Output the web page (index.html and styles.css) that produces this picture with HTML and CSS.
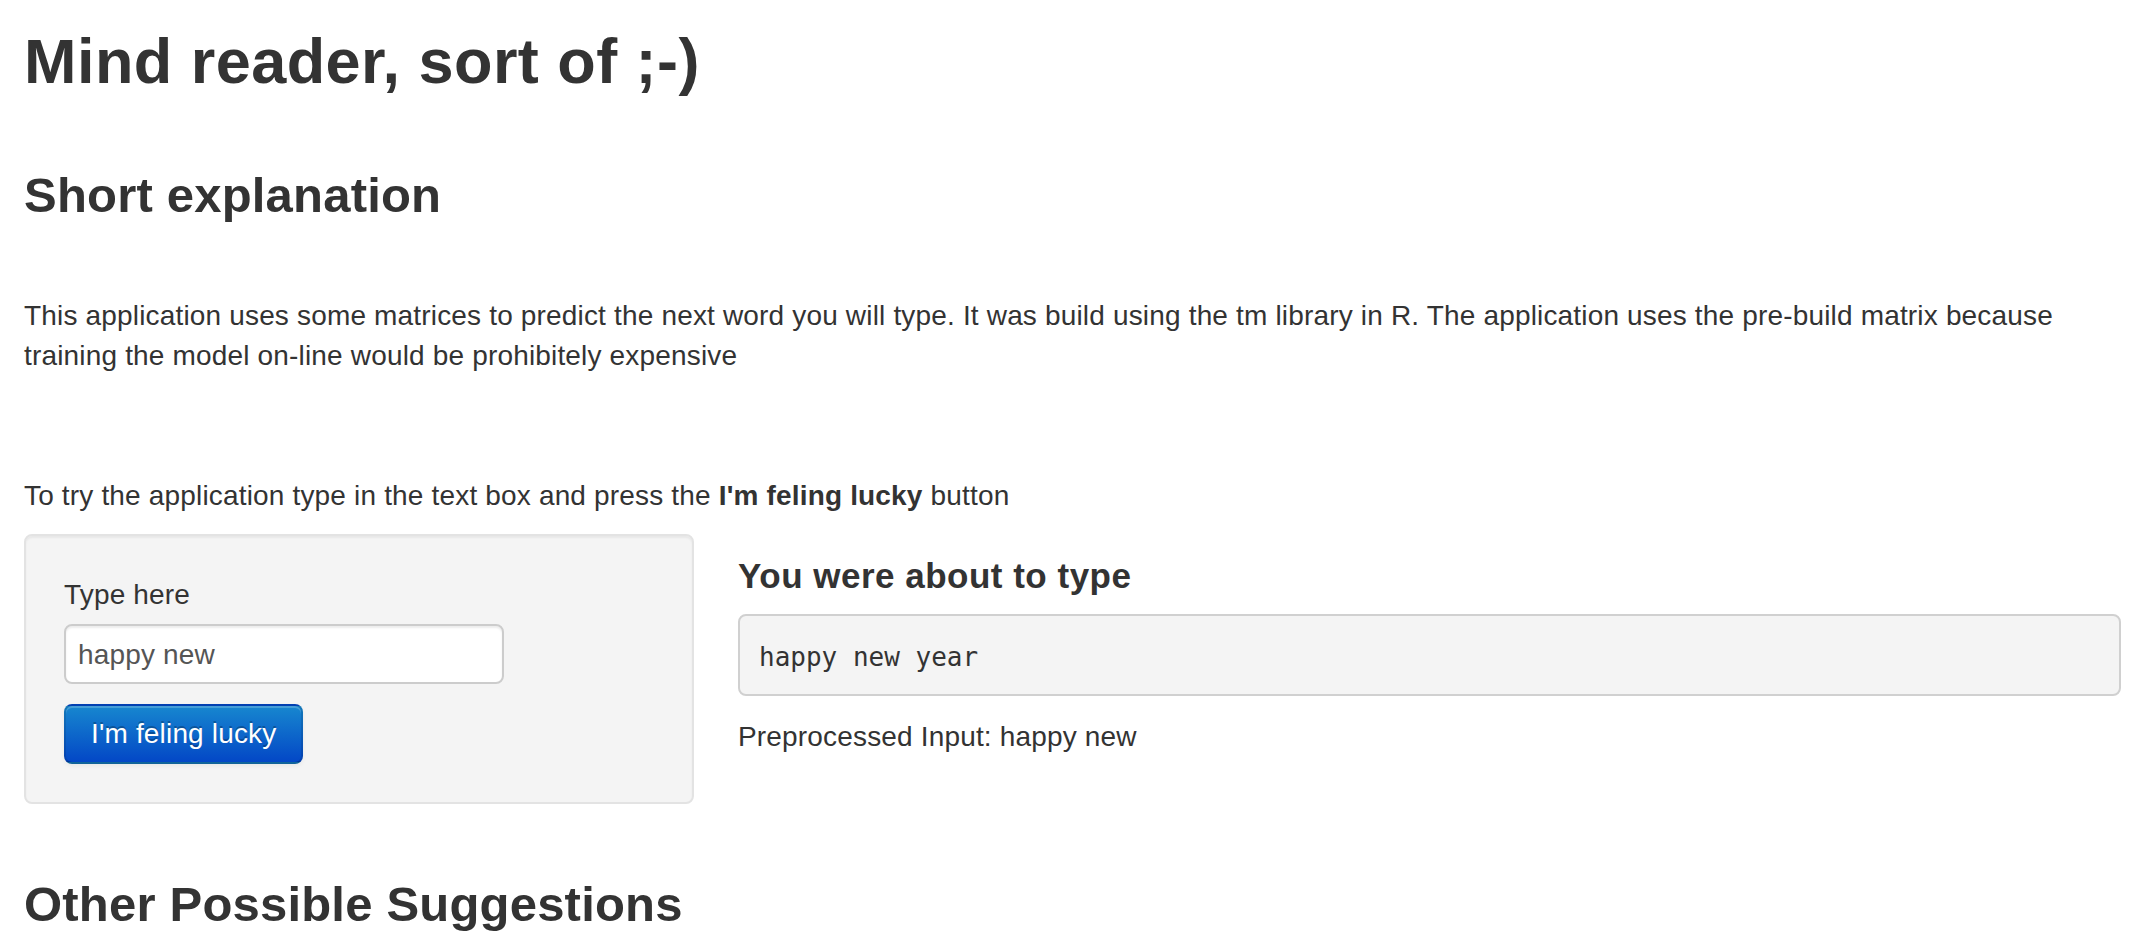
FILE: index.html
```html
<!DOCTYPE html>
<html lang="en">
<head>
<meta charset="utf-8">
<title>Mind reader, sort of ;-)</title>
<link rel="stylesheet" href="styles.css">
</head>
<body>
<div class="page">
  <h1 class="title">Mind reader, sort of ;-)</h1>
  <h3 class="section-title">Short explanation</h3>
  <p class="intro">This application uses some matrices to predict the next word you will type. It was build using the tm library in R. The application uses the pre-build matrix because training the model on-line would be prohibitely expensive</p>
  <p class="howto">To try the application type in the text box and press the <strong>I'm feling lucky</strong> button</p>
  <div class="row">
    <div class="well">
      <label class="field-label" for="txt">Type here</label>
      <input class="text-input" id="txt" type="text" value="happy new">
      <button class="btn-primary" type="button">I'm feling lucky</button>
    </div>
    <div class="main">
      <h4 class="result-title">You were about to type</h4>
      <pre class="result">happy new year</pre>
      <div class="preprocessed">Preprocessed Input: happy new</div>
    </div>
  </div>
  <h3 class="section-title other">Other Possible Suggestions</h3>
</div>
</body>
</html>
```

FILE: styles.css
```css
html, body {
  margin: 0;
  padding: 0;
  background: #ffffff;
}

body {
  font-family: "Liberation Sans", Arial, Helvetica, sans-serif;
  font-size: 28px;
  line-height: 40px;
  color: #333333;
  letter-spacing: 0.17px;
}

.page {
  padding: 0 13px 0 24px;
}

.title {
  margin: 21px 0 0;
  font-size: 63px;
  line-height: 80px;
  font-weight: bold;
  letter-spacing: 0.45px;
  color: #333333;
}

.section-title {
  margin: 54px 0 0;
  font-size: 49px;
  line-height: 80px;
  font-weight: bold;
  letter-spacing: 0.2px;
  color: #333333;
}

.intro {
  margin: 61px 0 0;
}

.howto {
  margin: 100px 0 0;
}

.howto strong {
  font-weight: bold;
}

.row {
  display: grid;
  grid-template-columns: 670px 1fr;
  column-gap: 44px;
  align-items: start;
  margin-top: 18px;
}

.well {
  display: flex;
  flex-direction: column;
  align-items: flex-start;
  padding: 38px;
  background: #f4f4f4;
  border: 2px solid #e3e3e3;
  border-radius: 8px;
  box-shadow: inset 0 2px 2px rgba(0, 0, 0, 0.05);
}

.field-label {
  display: block;
  margin-top: 1px;
  margin-bottom: 9px;
  font-size: 28px;
  line-height: 40px;
  color: #333333;
}

.text-input {
  box-sizing: border-box;
  width: 440px;
  height: 60px;
  margin: 0 0 20px;
  padding: 9px 12px 7px;
  font-family: "Liberation Sans", Arial, Helvetica, sans-serif;
  font-size: 28px;
  line-height: 40px;
  letter-spacing: 0.17px;
  color: #555555;
  background: #ffffff;
  border: 2px solid #cccccc;
  border-radius: 8px;
  box-shadow: inset 0 2px 2px rgba(0, 0, 0, 0.075);
  outline: none;
}

.btn-primary {
  box-sizing: border-box;
  height: 60px;
  padding: 8px 25px;
  font-family: "Liberation Sans", Arial, Helvetica, sans-serif;
  font-size: 28px;
  line-height: 40px;
  letter-spacing: 0.17px;
  color: #ffffff;
  text-shadow: 0 -2px 0 rgba(0, 0, 0, 0.25);
  background-color: #0a63c8;
  background-image: linear-gradient(to bottom, #1787cf, #0347c6);
  border: 2px solid rgba(0, 0, 0, 0.1);
  border-bottom-color: rgba(0, 0, 0, 0.25);
  border-radius: 8px;
  box-shadow: inset 0 2px 0 rgba(255, 255, 255, 0.2), 0 2px 4px rgba(0, 0, 0, 0.05);
  cursor: pointer;
}

.main {
  min-width: 0;
}

.result-title {
  margin: 22px 0 0;
  font-size: 35px;
  line-height: 40px;
  font-weight: bold;
  letter-spacing: 0.5px;
  color: #333333;
}

.result {
  margin: 18px 0 0;
  padding: 21px 19px 17px;
  font-family: "DejaVu Sans Mono", "Liberation Mono", monospace;
  font-size: 26px;
  line-height: 40px;
  letter-spacing: 0;
  color: #333333;
  background: #f4f4f4;
  border: 2px solid #d0d0d0;
  border-radius: 8px;
  white-space: pre-wrap;
}

.preprocessed {
  margin-top: 21px;
}

.other {
  margin-top: 60px;
}
```
